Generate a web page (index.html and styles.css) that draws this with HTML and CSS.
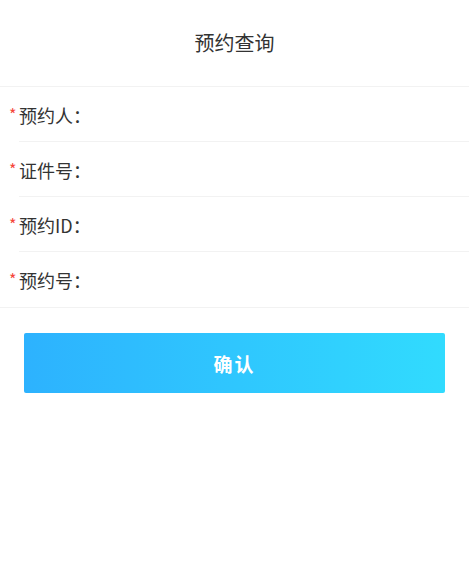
FILE: index.html
```html
<!DOCTYPE html>
<html lang="zh">
<head>
<meta charset="utf-8">
<link rel="stylesheet" href="styles.css">
</head>
<body>
<div class="page">
  <header class="header">预约查询</header>
  <div class="form">
    <div class="row"><span class="star">*</span><span class="label">预约人：</span></div>
    <div class="row"><span class="star">*</span><span class="label">证件号：</span></div>
    <div class="row"><span class="star">*</span><span class="label">预约ID：</span></div>
    <div class="row last"><span class="star">*</span><span class="label">预约号：</span></div>
  </div>
  <div class="actions">
    <button class="btn">确认</button>
  </div>
</div>
</body>
</html>
```
FILE: styles.css
```css
html, body {
  margin: 0;
  padding: 0;
  background: #fff;
}
body {
  font-family: "Noto Sans CJK SC", "Noto Sans", sans-serif;
  color: #333;
}
.header {
  height: 87px;
  display: flex;
  align-items: center;
  justify-content: center;
  font-size: 20px;
  color: #333;
  border-bottom: 1px solid #f2f2f2;
  box-sizing: border-box;
  padding-bottom: 2px;
}
.form {
  border-bottom: 1px solid #f2f2f2;
}
.row {
  height: 55px;
  box-sizing: border-box;
  display: flex;
  align-items: center;
  padding-left: 9px;
  font-size: 18px;
  position: relative;
}
.row::after {
  content: "";
  position: absolute;
  left: 19px;
  right: 0;
  bottom: 0;
  height: 1px;
  background: #f2f2f2;
}
.row.last::after {
  display: none;
}
.star {
  color: #f5463b;
  font-size: 16px;
  width: 10px;
  margin-top: -1px;
}
.label {
  color: #333;
}
.actions {
  padding: 25px 24px 0;
}
.btn {
  display: block;
  width: 100%;
  height: 60px;
  border: none;
  border-radius: 2px;
  background: linear-gradient(90deg, #2db2fe, #31dbfe);
  color: #fff;
  font-family: "Noto Sans CJK SC", sans-serif;
  font-weight: bold;
  font-size: 19px;
  letter-spacing: 2px;
}
```
